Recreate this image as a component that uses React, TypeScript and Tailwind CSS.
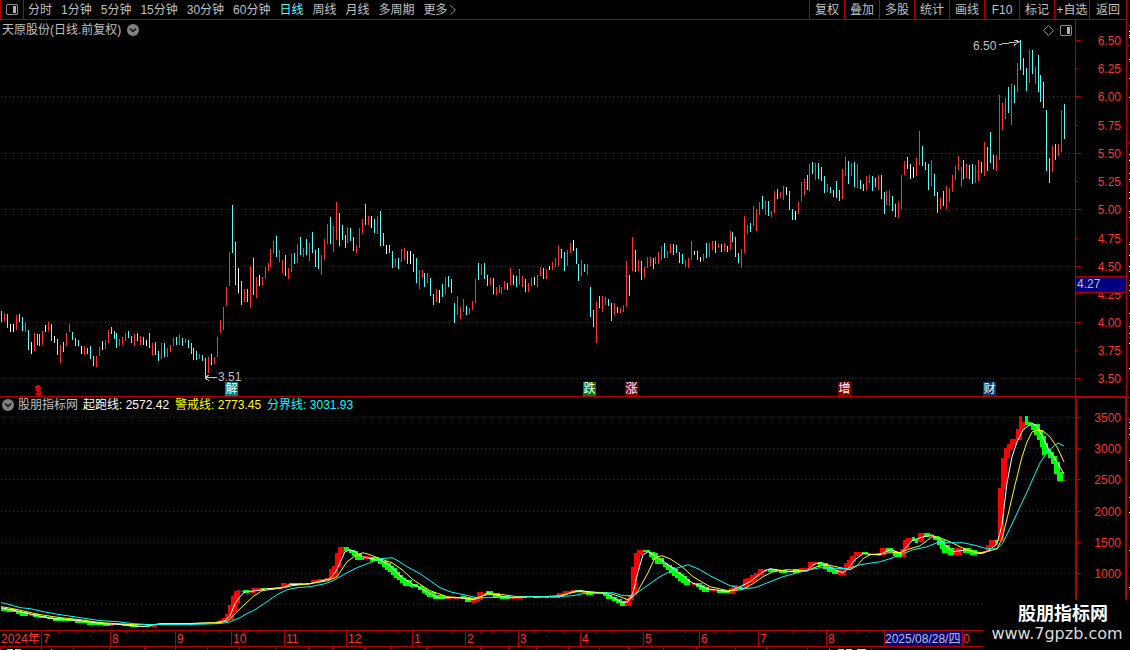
import { ChevronRight } from 'lucide-react';

type Kind = 'r' | 'c' | 'w';
type Candle = [number, number, number, Kind];
type Block = [number, number, number, number];

const CHART_W = 1075;

const periods = ['分时', '1分钟', '5分钟', '15分钟', '30分钟', '60分钟', '日线', '周线', '月线', '多周期'];
const tools = ['复权', '叠加', '多股', '统计', '画线', 'F10', '标记', '+自选'];

const strokes = { r: '#ff3232', c: '#54fcfc', w: '#ffffff' };

// x, high, low, kind
const candles: Candle[] = [
  [1, 311, 322, 'c'], [4, 313, 321, 'r'], [7, 314, 328, 'c'], [10, 324, 332, 'w'], [13, 324, 332, 'w'], [16, 315, 330, 'r'],
  [19, 314, 322, 'c'], [22, 317, 331, 'c'], [25, 322, 332, 'r'], [28, 330, 350, 'c'], [31, 342, 354, 'w'], [34, 333, 351, 'r'],
  [37, 334, 345, 'c'], [39, 334, 346, 'c'], [42, 331, 345, 'r'], [45, 325, 332, 'w'], [48, 322, 331, 'r'], [51, 324, 341, 'c'],
  [54, 336, 343, 'w'], [57, 339, 355, 'c'], [60, 345, 363, 'r'], [63, 342, 352, 'c'], [66, 333, 346, 'r'], [69, 324, 332, 'r'],
  [72, 332, 340, 'c'], [75, 338, 346, 'c'], [78, 340, 346, 'c'], [81, 346, 354, 'w'], [84, 346, 355, 'r'], [87, 348, 354, 'c'],
  [90, 346, 359, 'c'], [93, 356, 366, 'c'], [96, 356, 367, 'r'], [99, 347, 356, 'r'], [102, 341, 350, 'w'], [105, 340, 349, 'r'],
  [108, 330, 343, 'r'], [111, 327, 334, 'c'], [114, 331, 339, 'c'], [116, 333, 348, 'c'], [119, 339, 346, 'r'], [122, 337, 345, 'r'],
  [125, 333, 341, 'r'], [128, 331, 338, 'c'], [131, 336, 343, 'c'], [134, 334, 346, 'r'], [137, 333, 341, 'c'], [140, 336, 345, 'r'],
  [143, 337, 345, 'c'], [146, 340, 346, 'w'], [149, 333, 348, 'c'], [152, 343, 355, 'r'], [155, 342, 355, 'c'], [158, 351, 361, 'c'],
  [161, 343, 359, 'r'], [164, 343, 357, 'c'], [167, 348, 357, 'r'], [170, 345, 352, 'r'], [173, 338, 346, 'r'], [176, 337, 345, 'c'],
  [179, 334, 345, 'r'], [182, 338, 346, 'c'], [185, 339, 343, 'r'], [188, 340, 348, 'c'], [191, 343, 354, 'c'], [193, 348, 360, 'c'],
  [196, 351, 360, 'c'], [199, 354, 359, 'r'], [202, 355, 361, 'c'], [205, 358, 379, 'c'], [208, 357, 373, 'r'], [211, 354, 365, 'c'],
  [214, 357, 364, 'r'], [217, 337, 357, 'r'], [220, 320, 333, 'r'], [223, 307, 330, 'r'], [226, 287, 306, 'r'], [229, 252, 286, 'r'],
  [232, 205, 253, 'c'], [235, 242, 285, 'c'], [238, 268, 293, 'w'], [241, 281, 305, 'c'], [244, 289, 302, 'r'], [247, 289, 302, 'c'],
  [250, 266, 308, 'r'], [253, 258, 295, 'c'], [256, 277, 298, 'r'], [259, 275, 286, 'w'], [262, 277, 285, 'r'], [265, 267, 278, 'r'],
  [268, 263, 271, 'r'], [270, 249, 267, 'r'], [273, 241, 253, 'r'], [276, 236, 257, 'c'], [279, 250, 262, 'r'], [282, 260, 273, 'r'],
  [285, 255, 276, 'c'], [288, 268, 279, 'r'], [291, 254, 272, 'r'], [294, 253, 264, 'c'], [297, 244, 263, 'r'], [300, 237, 255, 'c'],
  [303, 248, 257, 'r'], [306, 239, 255, 'c'], [309, 243, 261, 'r'], [312, 232, 253, 'c'], [315, 250, 267, 'c'], [318, 248, 269, 'c'],
  [321, 255, 275, 'r'], [324, 239, 260, 'r'], [327, 224, 244, 'r'], [330, 217, 244, 'c'], [333, 226, 252, 'r'], [336, 202, 240, 'r'],
  [339, 213, 246, 'c'], [342, 225, 240, 'c'], [345, 235, 248, 'c'], [347, 227, 243, 'r'], [350, 228, 241, 'c'], [353, 237, 251, 'c'],
  [356, 245, 253, 'r'], [359, 228, 248, 'r'], [362, 219, 234, 'r'], [365, 204, 225, 'c'], [368, 216, 225, 'r'], [371, 216, 228, 'w'],
  [374, 219, 233, 'c'], [377, 216, 234, 'r'], [380, 211, 246, 'c'], [383, 233, 246, 'c'], [386, 245, 254, 'w'], [389, 245, 253, 'c'],
  [392, 251, 268, 'c'], [395, 259, 267, 'r'], [398, 258, 269, 'c'], [401, 249, 262, 'r'], [404, 248, 260, 'r'], [407, 251, 264, 'c'],
  [410, 251, 264, 'w'], [413, 254, 272, 'c'], [416, 258, 283, 'c'], [419, 270, 289, 'r'], [422, 270, 278, 'r'], [424, 273, 287, 'c'],
  [427, 273, 283, 'r'], [430, 278, 296, 'c'], [433, 294, 305, 'c'], [436, 289, 302, 'r'], [439, 290, 303, 'w'], [442, 284, 297, 'c'],
  [445, 277, 294, 'r'], [448, 276, 287, 'c'], [451, 279, 293, 'c'], [454, 303, 323, 'c'], [457, 296, 315, 'r'], [460, 307, 319, 'r'],
  [463, 299, 312, 'r'], [466, 306, 315, 'c'], [469, 308, 314, 'r'], [472, 301, 310, 'r'], [475, 279, 303, 'r'], [478, 263, 280, 'c'],
  [481, 264, 275, 'r'], [484, 263, 279, 'c'], [487, 275, 286, 'c'], [490, 278, 285, 'r'], [493, 278, 294, 'c'], [496, 287, 295, 'r'],
  [499, 285, 293, 'r'], [501, 287, 294, 'r'], [504, 281, 289, 'r'], [507, 283, 290, 'c'], [510, 268, 285, 'r'], [513, 275, 285, 'c'],
  [516, 276, 287, 'c'], [519, 269, 285, 'r'], [522, 276, 287, 'r'], [525, 279, 292, 'c'], [528, 283, 292, 'r'], [531, 278, 286, 'r'],
  [534, 277, 285, 'w'], [537, 275, 287, 'r'], [540, 267, 276, 'r'], [543, 268, 279, 'c'], [546, 269, 279, 'r'], [549, 266, 270, 'w'],
  [552, 262, 270, 'r'], [555, 258, 267, 'r'], [558, 245, 266, 'r'], [561, 249, 258, 'c'], [564, 252, 271, 'c'], [567, 250, 266, 'r'],
  [570, 243, 253, 'r'], [573, 240, 251, 'w'], [576, 248, 264, 'c'], [578, 264, 281, 'c'], [581, 260, 276, 'r'], [584, 264, 272, 'c'],
  [587, 264, 275, 'r'], [590, 287, 317, 'c'], [593, 310, 327, 'c'], [596, 302, 343, 'r'], [599, 296, 308, 'c'], [602, 296, 312, 'r'],
  [605, 297, 305, 'r'], [608, 299, 306, 'c'], [611, 303, 321, 'c'], [614, 303, 315, 'r'], [617, 307, 313, 'c'], [620, 308, 313, 'r'],
  [623, 305, 312, 'r'], [626, 261, 307, 'r'], [629, 275, 296, 'c'], [632, 237, 271, 'r'], [635, 250, 272, 'c'], [638, 260, 271, 'r'],
  [641, 261, 280, 'c'], [644, 267, 278, 'r'], [647, 257, 268, 'r'], [650, 257, 266, 'r'], [653, 258, 269, 'c'], [655, 257, 264, 'r'],
  [658, 252, 264, 'r'], [661, 246, 260, 'r'], [664, 243, 258, 'c'], [667, 251, 258, 'r'], [670, 244, 253, 'r'], [673, 244, 255, 'c'],
  [676, 245, 253, 'c'], [679, 252, 263, 'c'], [682, 254, 264, 'c'], [685, 260, 267, 'r'], [688, 258, 268, 'r'], [691, 241, 260, 'r'],
  [694, 251, 255, 'w'], [697, 251, 260, 'c'], [700, 257, 262, 'w'], [703, 254, 261, 'r'], [706, 243, 258, 'c'], [709, 243, 257, 'r'],
  [712, 241, 250, 'r'], [715, 241, 253, 'c'], [718, 243, 248, 'r'], [721, 244, 252, 'c'], [724, 243, 251, 'r'], [727, 246, 252, 'c'],
  [730, 231, 250, 'r'], [732, 232, 242, 'c'], [735, 237, 257, 'c'], [738, 253, 263, 'c'], [741, 249, 268, 'r'], [744, 216, 253, 'r'],
  [747, 225, 234, 'r'], [750, 223, 232, 'c'], [753, 206, 226, 'r'], [756, 209, 231, 'r'], [759, 202, 215, 'r'], [762, 196, 209, 'c'],
  [765, 201, 215, 'r'], [768, 201, 216, 'c'], [771, 211, 217, 'r'], [774, 191, 213, 'r'], [777, 189, 199, 'c'], [780, 192, 198, 'r'],
  [783, 186, 200, 'r'], [786, 187, 195, 'w'], [789, 191, 210, 'c'], [792, 209, 220, 'c'], [795, 211, 220, 'w'], [798, 202, 214, 'r'],
  [801, 182, 202, 'r'], [804, 179, 195, 'r'], [807, 175, 190, 'c'], [809, 164, 191, 'r'], [812, 162, 174, 'c'], [815, 163, 180, 'r'],
  [818, 163, 179, 'c'], [821, 167, 181, 'c'], [824, 176, 193, 'c'], [827, 184, 192, 'r'], [830, 187, 193, 'c'], [833, 190, 197, 'c'],
  [836, 181, 198, 'c'], [839, 190, 201, 'c'], [842, 169, 199, 'r'], [845, 157, 176, 'r'], [848, 161, 184, 'c'], [851, 163, 176, 'r'],
  [854, 162, 187, 'c'], [857, 164, 188, 'r'], [860, 180, 189, 'c'], [863, 184, 191, 'c'], [866, 176, 190, 'r'], [869, 175, 183, 'r'],
  [872, 176, 191, 'c'], [875, 178, 187, 'c'], [878, 175, 190, 'r'], [881, 175, 199, 'c'], [884, 192, 214, 'c'], [886, 191, 205, 'r'],
  [889, 190, 206, 'r'], [892, 196, 211, 'c'], [895, 204, 217, 'c'], [898, 202, 218, 'r'], [901, 175, 209, 'r'], [904, 161, 175, 'r'],
  [907, 157, 169, 'c'], [910, 164, 179, 'w'], [913, 167, 178, 'w'], [916, 158, 176, 'r'], [919, 131, 165, 'r'], [922, 146, 166, 'c'],
  [925, 162, 170, 'c'], [928, 164, 190, 'c'], [931, 160, 186, 'r'], [934, 174, 196, 'c'], [937, 192, 213, 'c'], [940, 198, 209, 'r'],
  [943, 191, 206, 'c'], [946, 186, 209, 'r'], [949, 188, 202, 'r'], [952, 175, 192, 'r'], [955, 166, 180, 'r'], [958, 156, 170, 'r'],
  [961, 167, 187, 'r'], [963, 160, 179, 'c'], [966, 164, 178, 'r'], [969, 165, 179, 'c'], [972, 164, 184, 'c'], [975, 165, 183, 'r'],
  [978, 160, 181, 'r'], [981, 162, 173, 'c'], [984, 142, 176, 'r'], [987, 147, 171, 'c'], [990, 132, 163, 'c'], [993, 155, 169, 'c'],
  [996, 155, 171, 'r'], [999, 95, 160, 'r'], [1002, 103, 130, 'r'], [1005, 98, 119, 'r'], [1008, 87, 113, 'c'], [1011, 84, 125, 'r'],
  [1014, 85, 103, 'c'], [1017, 63, 92, 'r'], [1020, 40, 70, 'c'], [1023, 58, 75, 'c'], [1026, 68, 91, 'c'], [1029, 50, 83, 'r'],
  [1032, 50, 74, 'c'], [1035, 67, 84, 'r'], [1038, 55, 92, 'c'], [1040, 75, 102, 'c'], [1043, 82, 108, 'c'], [1046, 110, 171, 'c'],
  [1049, 158, 183, 'c'], [1052, 146, 172, 'r'], [1055, 144, 160, 'c'], [1058, 144, 156, 'r'], [1061, 110, 152, 'r'], [1064, 104, 139, 'c'],
];

// x, width, top, bottom
const rising: Block[] = [
  [29, 4, 614, 616], [110, 4, 624, 626], [151, 6, 624, 627], [175, 7, 623, 624], [216, 6, 621, 624], [219, 6, 620, 623],
  [222, 6, 618, 622], [225, 6, 614, 620], [228, 6, 605, 620], [231, 6, 596, 612], [234, 6, 591, 603], [237, 3, 590, 597],
  [240, 4, 591, 592], [249, 6, 591, 593], [252, 9, 588, 591], [267, 8, 588, 590], [275, 6, 587, 589], [281, 6, 583, 588],
  [286, 4, 584, 586], [305, 5, 583, 585], [311, 6, 580, 583], [317, 8, 579, 582], [325, 5, 578, 580], [329, 6, 569, 579],
  [332, 6, 566, 577], [335, 6, 553, 567], [338, 6, 547, 554], [363, 7, 556, 559], [445, 6, 597, 599], [454, 6, 597, 599],
  [471, 4, 600, 603], [475, 5, 597, 602], [477, 6, 592, 600], [480, 6, 593, 596], [510, 5, 598, 599], [516, 7, 596, 599],
  [540, 5, 597, 598], [550, 10, 597, 598], [557, 6, 593, 597], [563, 8, 591, 594], [571, 5, 590, 592], [583, 4, 591, 593],
  [592, 5, 593, 594], [625, 6, 599, 606], [628, 6, 595, 600], [631, 6, 567, 595], [634, 6, 553, 570], [637, 6, 550, 555],
  [692, 4, 583, 585], [709, 6, 589, 591], [729, 6, 588, 594], [732, 6, 585, 591], [743, 6, 579, 588], [746, 8, 578, 583],
  [750, 7, 575, 581], [754, 6, 573, 577], [758, 6, 569, 575], [764, 3, 569, 572], [776, 4, 570, 571], [790, 4, 571, 572],
  [799, 9, 568, 572], [808, 6, 562, 569], [814, 4, 562, 564], [838, 8, 569, 575], [844, 6, 563, 569], [847, 6, 560, 569],
  [850, 6, 556, 562], [854, 8, 552, 556], [876, 6, 554, 556], [880, 6, 548, 555], [900, 6, 549, 557], [903, 6, 540, 550],
  [906, 6, 538, 542], [918, 6, 533, 542], [930, 4, 535, 537], [954, 8, 548, 555], [980, 4, 552, 554], [986, 4, 545, 552],
  [989, 6, 540, 547], [994, 4, 541, 545], [998, 6, 488, 541], [1001, 6, 458, 489], [1004, 6, 448, 458], [1004, 3, 458, 478],
  [1007, 6, 444, 450], [1010, 7, 439, 445], [1016, 6, 429, 440], [1019, 3, 416, 430], [1022, 3, 422, 430], [1063, 3, 480, 481],
];

const falling: Block[] = [
  [1, 6, 608, 611], [7, 9, 609, 612], [16, 6, 611, 614], [20, 8, 612, 616], [33, 6, 614, 617], [39, 8, 616, 618],
  [47, 6, 617, 619], [53, 12, 618, 621], [65, 10, 619, 621], [75, 12, 621, 623], [87, 16, 622, 625], [103, 7, 624, 626],
  [122, 8, 624, 626], [130, 8, 625, 627], [138, 12, 626, 627], [157, 8, 624, 625], [182, 18, 623, 624], [243, 6, 590, 593],
  [261, 4, 588, 590], [289, 6, 583, 585], [295, 8, 583, 585], [344, 5, 547, 551], [349, 6, 550, 553], [352, 6, 551, 556],
  [355, 7, 554, 560], [361, 3, 558, 560], [370, 9, 557, 561], [378, 5, 559, 564], [382, 6, 561, 567], [385, 6, 563, 570],
  [388, 6, 566, 572], [391, 6, 568, 575], [394, 6, 572, 578], [397, 6, 575, 580], [400, 6, 578, 583], [403, 9, 580, 586],
  [410, 8, 584, 587], [418, 6, 586, 590], [422, 5, 588, 593], [425, 5, 590, 595], [427, 9, 592, 597], [433, 12, 595, 599],
  [461, 5, 596, 599], [465, 6, 597, 602], [486, 7, 591, 594], [493, 7, 593, 597], [500, 10, 596, 599], [524, 3, 597, 598],
  [533, 7, 596, 598], [545, 4, 596, 598], [575, 8, 590, 592], [586, 7, 592, 595], [597, 6, 592, 594], [603, 5, 594, 596],
  [606, 6, 595, 599], [612, 5, 597, 601], [616, 6, 599, 603], [620, 5, 601, 606], [643, 7, 550, 552], [649, 6, 552, 557],
  [652, 6, 553, 560], [655, 9, 558, 564], [663, 5, 563, 567], [666, 6, 565, 570], [669, 6, 567, 573], [672, 6, 569, 576],
  [675, 6, 572, 578], [678, 6, 574, 581], [681, 6, 576, 583], [684, 6, 579, 585], [696, 6, 583, 587], [699, 6, 585, 590],
  [702, 7, 587, 592], [717, 9, 590, 593], [726, 4, 591, 593], [738, 5, 587, 589], [768, 9, 569, 572], [779, 8, 570, 573],
  [793, 6, 569, 573], [818, 5, 562, 566], [823, 5, 563, 569], [827, 6, 567, 572], [832, 6, 570, 574], [862, 6, 552, 554],
  [868, 6, 554, 555], [886, 7, 548, 552], [893, 5, 551, 556], [896, 6, 552, 557], [912, 3, 537, 541], [915, 3, 539, 543],
  [924, 6, 533, 537], [933, 6, 536, 540], [937, 5, 538, 545], [940, 5, 540, 549], [942, 8, 545, 553], [948, 6, 548, 555],
  [963, 8, 548, 553], [970, 7, 550, 555], [995, 3, 540, 543], [1025, 3, 416, 425], [1028, 3, 422, 426], [1031, 9, 424, 430],
  [1034, 6, 426, 435], [1037, 6, 430, 440], [1040, 6, 436, 447], [1042, 6, 443, 453], [1042, 3, 452, 455], [1045, 6, 449, 454],
  [1048, 6, 452, 458], [1051, 6, 456, 464], [1054, 6, 462, 474], [1057, 6, 472, 481],
];

const whiteLine =
  '1,608 20,612 33,615 53,619 80,621 103,624 123,625 143,627 160,624 187,624 217,623 225,621 230,616 235,604 240,597 245,592 257,591 267,589 283,588 290,585 310,584 330,579 337,570 340,563 345,552 350,550 355,552 362,557 377,560 380,560 390,566 400,576 410,583 420,588 430,594 438,598 460,598 473,600 480,598 488,593 503,597 513,598 530,597 560,597 573,592 580,591 607,594 615,599 623,603 628,602 633,593 638,572 643,555 648,552 655,556 667,564 680,574 692,583 707,589 728,592 740,587 750,582 763,572 770,569 790,572 807,571 813,565 820,563 828,566 837,571 843,573 848,569 855,560 863,554 880,555 887,551 892,550 900,554 905,549 912,541 920,538 932,535 940,540 947,547 953,552 967,550 980,554 987,552 997,544 1002,525 1007,483 1012,457 1017,442 1023,430 1032,423 1037,426 1042,436 1050,452 1057,462 1064,474';
const yellowLine =
  '1,607 13,609 40,615 60,618 80,620 100,623 133,625 150,625 220,623 228,621 238,611 253,597 262,591 283,588 292,586 310,584 328,581 337,577 347,562 357,555 363,553 370,555 380,559 392,563 402,570 413,580 430,591 447,597 460,598 473,599 487,595 503,595 517,597 543,597 560,596 568,594 577,592 607,593 617,596 628,600 633,597 638,591 648,573 655,558 662,556 670,559 682,567 693,577 710,587 728,591 742,590 753,584 763,577 773,572 787,570 807,571 817,567 827,565 850,570 857,566 863,559 870,555 890,553 900,553 910,549 920,546 932,537 940,538 950,542 960,547 970,551 980,553 990,551 997,549 1002,539 1008,515 1015,485 1022,457 1027,442 1032,432 1037,430 1043,431 1050,437 1057,447 1064,462';
const cyanLine =
  '1,603 10,605 20,608 30,609 43,612 60,615 80,618 100,621 117,622 133,624 150,625 167,625 187,625 217,624 227,623 233,621 240,618 247,614 255,610 267,602 277,595 287,590 297,588 310,587 325,584 333,581 347,573 357,568 367,564 380,559 392,558 398,561 407,567 420,574 430,581 440,588 450,592 463,595 477,598 487,598 530,597 557,597 573,596 583,594 613,593 623,596 633,596 640,591 647,586 660,577 675,569 688,565 698,569 710,576 720,581 730,586 743,589 755,588 770,582 783,577 797,573 810,570 820,568 847,569 860,565 880,562 890,559 903,554 913,550 927,547 937,543 963,543 977,546 987,549 997,549 1003,543 1013,522 1027,492 1040,463 1048,451 1058,443 1064,446';

const priceAxis = [
  { y: 40, label: '6.50' }, { y: 68, label: '6.25' }, { y: 96, label: '6.00' }, { y: 125, label: '5.75' },
  { y: 153, label: '5.50' }, { y: 181, label: '5.25' }, { y: 209, label: '5.00' }, { y: 238, label: '4.75' },
  { y: 266, label: '4.50' }, { y: 294, label: '4.25' }, { y: 322, label: '4.00' }, { y: 350, label: '3.75' },
  { y: 378, label: '3.50' },
];
const priceGrid = [96, 153, 209, 266, 322, 378];

const valueAxis = [
  { y: 417, label: '3500' }, { y: 448, label: '3000' }, { y: 479, label: '2500' },
  { y: 511, label: '2000' }, { y: 542, label: '1500' }, { y: 573, label: '1000' },
];
const valueGrid = [417, 448, 479, 511, 542, 573, 604];

const months = [
  { x: 41, label: '7' }, { x: 110, label: '8' }, { x: 175, label: '9' }, { x: 231, label: '10' }, { x: 284, label: '11' },
  { x: 346, label: '12' }, { x: 412, label: '1' }, { x: 465, label: '2' }, { x: 518, label: '3' }, { x: 580, label: '4' },
  { x: 643, label: '5' }, { x: 699, label: '6' }, { x: 758, label: '7' }, { x: 826, label: '8' },
];
const weekTicks = [
  58, 76, 93, 126, 143, 159, 191, 204, 219, 244, 258, 271, 299, 315, 330, 363, 380, 396, 425, 439, 452, 480, 492, 505, 534, 549,
  564, 596, 612, 627, 657, 671, 685, 714, 728, 743, 775, 792, 809, 842, 856, 869, 969, 979,
];
const footTicks = [0, 41, 73, 109, 144, 175, 207, 239, 275, 308, 332, 364, 390, 426, 480, 508, 536, 568, 599, 628, 663, 696, 735, 766, 807, 871];

const events = [
  { x: 225, label: '解', tone: 'bg-[#008080]' },
  { x: 583, label: '跌', tone: 'bg-[#008000]' },
  { x: 625, label: '涨', tone: 'bg-[#800000]' },
  { x: 838, label: '增', tone: 'bg-[#800000]' },
  { x: 983, label: '财', tone: 'bg-[#003a70]' },
];

const edgeWhite = [31, 35, 37, 59, 78, 97, 154, 160, 173, 179, 192, 198, 211, 217, 244, 255, 266, 271, 285, 290, 313, 326, 333, 343, 368, 422, 428, 434, 460, 497, 512, 550, 587];
const edgeRed = [25, 45, 142, 337, 397, 418, 437];

const left = (x: number) => ({ left: `${(x / CHART_W) * 100}%` });

function PanelIcon({ className }: { className: string }) {
  return (
    <svg className={className} viewBox="0 0 12 11" shapeRendering="crispEdges">
      <path d="M1 0.5H11M1 10.5H11M0.5 1V10M11.5 1V10" stroke="#8c8c8c" fill="none" />
      <path d="M7 2H10V9H7Z" fill="#b0b0b0" />
    </svg>
  );
}

function RoundChevron() {
  return (
    <svg className="h-3 w-3 flex-none" viewBox="0 0 12 12">
      <circle cx="6" cy="6" r="6" fill="#808080" />
      <path d="M3 4.5L6 7.5L9 4.5" stroke="#101010" strokeWidth="1.5" fill="none" />
    </svg>
  );
}

function Grid({ rows }: { rows: number[] }) {
  return (
    <g stroke="#b00000" strokeDasharray="1 3">
      {rows.map((y) => (
        <line key={y} x1={1} x2={CHART_W} y1={y + 0.5} y2={y + 0.5} />
      ))}
    </g>
  );
}

function TopBar() {
  return (
    <nav className="flex h-5 flex-none items-stretch border-r border-b border-[#b00000] leading-[18px] whitespace-nowrap">
      <button type="button" aria-label="侧栏" className="flex w-6 flex-none items-center justify-center border-x border-[#b00000]">
        <PanelIcon className="h-[11px] w-3" />
      </button>
      <div className="flex min-w-0 flex-1 gap-[9px] overflow-hidden pl-1">
        {periods.map((p) => (
          <button key={p} type="button" className={p === '日线' ? 'text-[#54fcfc]' : ''}>
            {p}
          </button>
        ))}
        <button type="button" className="flex items-center">
          更多
          <ChevronRight size={18} strokeWidth={1} className="-ml-1" />
        </button>
      </div>
      {tools.map((t) => (
        <button key={t} type="button" className="w-[35px] flex-none border-l border-[#b00000]">
          {t}
        </button>
      ))}
      <button type="button" className="w-[37px] flex-none border-l border-[#b00000]">
        返回
      </button>
    </nav>
  );
}

function PriceChart() {
  return (
    <section className="flex min-h-0 flex-[377_1_0px] border-b border-[#b00000]">
      <div className="flex min-w-0 flex-1 flex-col">
        <header className="flex h-5 flex-none items-center gap-[6px] pl-[2px]">
          <h1>天原股份(日线.前复权)</h1>
          <RoundChevron />
          <svg className="ml-auto h-[11px] w-[11px]" viewBox="0 0 11 11">
            <path d="M5.5 0.5L10.5 5.5L5.5 10.5L0.5 5.5Z" stroke="#8c8c8c" fill="none" />
          </svg>
          <PanelIcon className="mr-[3px] h-[11px] w-3" />
        </header>
        <div className="relative min-h-0 flex-1">
          <svg className="absolute inset-0 h-full w-full" viewBox="0 40 1075 356" preserveAspectRatio="none" shapeRendering="crispEdges">
            <Grid rows={priceGrid} />
            {candles.map(([x, high, low, kind]) => (
              <rect key={x} x={x} y={high} width={1} height={low - high} fill={strokes[kind]} />
            ))}
            <g stroke="#c0c0c0" fill="none">
              <path d="M999 44.5L1019 41.5M1013 39.5L1019 41.5L1014 45.5" />
              <path d="M205 377.5H217M209 374.5L205 377.5L209 380.5" />
            </g>
            <path d="M35 387.5H41M36 386.5H40M37 385.5H39" stroke="#ff0000" />
          </svg>
          <span className="absolute top-0 leading-3" style={left(973)}>6.50</span>
          <span className="absolute bottom-[14px] leading-[10px]" style={left(218)}>3.51</span>
          <span className="absolute bottom-0 text-[11px] leading-[10px] font-bold text-[#ff0000]" style={left(35)}>$</span>
          {events.map((e) => (
            <span
              key={e.x}
              className={`absolute bottom-0 h-[14px] w-[13px] overflow-hidden text-center leading-[14px] text-white ${e.tone}`}
              style={left(e.x)}
            >
              {e.label}
            </span>
          ))}
        </div>
      </div>
      <div className="relative w-[52px] flex-none border-x border-[#b00000] text-[#ff3232]">
        <svg className="absolute inset-0 h-full w-full" viewBox="1076 20 50 376" preserveAspectRatio="none" shapeRendering="crispEdges">
          {priceAxis.map((t, i) => (
            <rect key={t.y} x={1076} y={t.y} width={i % 2 ? 2 : 5} height={1} fill="#b00000" />
          ))}
        </svg>
        {priceAxis.map((t) => (
          <span key={t.y} className="absolute right-[5px] -mt-[5px] leading-3" style={{ top: `${((t.y - 20) / 376) * 100}%` }}>
            {t.label}
          </span>
        ))}
        <span className="absolute inset-x-0 top-[68%] h-[17px] border-y border-[#b00000] bg-[#000080] pl-px leading-[15px] text-[#c0c0c0]">
          4.27
        </span>
      </div>
    </section>
  );
}

function IndicatorChart() {
  return (
    <section className="flex min-h-0 flex-[233_1_0px]">
      <div className="flex min-w-0 flex-1 flex-col">
        <header className="flex h-4 flex-none items-center gap-1 pl-[2px] leading-4 whitespace-nowrap">
          <RoundChevron />
          <h2>股朋指标网</h2>
          <div className="flex gap-[6px] pl-px">
            <span className="text-white">起跑线: 2572.42</span>
            <span className="text-[#ffff00]">警戒线: 2773.45</span>
            <span className="text-[#00ffff]">分界线: 3031.93</span>
          </div>
        </header>
        <div className="relative min-h-0 flex-1">
          <svg className="absolute inset-0 h-full w-full" viewBox="0 413 1075 217" preserveAspectRatio="none" shapeRendering="crispEdges">
            <Grid rows={valueGrid} />
            {rising.map(([x, w, top, bottom], i) => (
              <rect key={i} x={x} y={top} width={w} height={bottom - top} fill="#ff0000" />
            ))}
            {falling.map(([x, w, top, bottom], i) => (
              <rect key={i} x={x} y={top} width={w} height={bottom - top} fill="#00ff00" />
            ))}
            <polyline points={whiteLine} stroke="#ffffff" fill="none" />
            <polyline points={yellowLine} stroke="#ffff00" fill="none" />
            <polyline points={cyanLine} stroke="#00ffff" fill="none" />
          </svg>
        </div>
      </div>
      <div className="relative w-[52px] flex-none border-x-2 border-t border-[#b00000] text-[#ff3232]">
        <svg className="absolute inset-0 h-full w-full" viewBox="1077 398 48 232" preserveAspectRatio="none" shapeRendering="crispEdges">
          {valueAxis.map((t) => (
            <g key={t.y} fill="#b00000">
              <rect x={1077} y={t.y} width={4} height={1} />
              <rect x={1077} y={t.y + 16} width={1} height={1} />
            </g>
          ))}
        </svg>
        {valueAxis.map((t) => (
          <span key={t.y} className="absolute right-1 -mt-[5px] leading-3" style={{ top: `${((t.y - 398) / 232) * 100}%` }}>
            {t.label}
          </span>
        ))}
      </div>
    </section>
  );
}

function DateAxis() {
  return (
    <footer className="flex-none pr-[52px]">
      <div className="-mr-[52px] h-[17px] border-y border-[#b00000] pr-[52px] text-[#ff3232]">
        <div className="relative h-full leading-[16px]">
          <svg className="absolute inset-0 h-full w-full" viewBox="0 631 1075 15" preserveAspectRatio="none" shapeRendering="crispEdges">
            {weekTicks.map((x) => (
              <rect key={x} x={x} y={631} width={1} height={2} fill="#b00000" />
            ))}
          </svg>
          <span className="absolute left-[1px]">2024年</span>
          {months.map((m) => (
            <span key={m.x} className="absolute h-full border-l border-[#b00000] pl-px" style={left(m.x)}>
              {m.label}
            </span>
          ))}
          <span className="absolute h-full w-[79px] border-x border-[#b00000] bg-[#000080] whitespace-nowrap text-[#c0c0c0]" style={left(884)}>
            2025/08/28/四
          </span>
          <span className="absolute" style={left(963)}>0</span>
        </div>
      </div>
      <svg className="block h-[3px] w-full" viewBox="0 647 1075 3" preserveAspectRatio="none" shapeRendering="crispEdges">
        {footTicks.map((x) => (
          <rect key={x} x={x} y={647} width={1} height={3} fill="#b00000" />
        ))}
        <path d="M7 649.5H13M15 649.5H21M51 649.5H52M829 649.5H830M838 649.5H844" stroke="#c0c0c0" />
        <path d="M846 649.5H852M857 649.5H866" stroke="#54fcfc" />
      </svg>
    </footer>
  );
}

export default function App() {
  return (
    <div className="relative flex h-screen overflow-hidden bg-black font-['Liberation_Sans','Noto_Sans_CJK_SC',sans-serif] text-[12px] text-[#c0c0c0]">
      <main className="flex min-w-0 flex-1 flex-col">
        <TopBar />
        <PriceChart />
        <IndicatorChart />
        <DateAxis />
      </main>
      <svg className="h-full w-[3px] flex-none" viewBox="0 0 3 650" preserveAspectRatio="none" shapeRendering="crispEdges">
        {edgeRed.map((y) => (
          <rect key={y} x={0} y={y} width={3} height={1} fill="#b00000" />
        ))}
        {edgeWhite.map((y) => (
          <rect key={y} x={2} y={y} width={1} height={1} fill="#ffffff" />
        ))}
      </svg>
      <div className="absolute right-0 bottom-0 flex h-[50px] w-[146px] flex-col items-center bg-black">
        <strong className="mt-1 pl-3 text-[18px] leading-5 text-white">股朋指标网</strong>
        <span className="font-['DejaVu_Sans',sans-serif] text-[16px] leading-5 text-[#dcdcdc]">www.7gpzb.com</span>
      </div>
    </div>
  );
}
